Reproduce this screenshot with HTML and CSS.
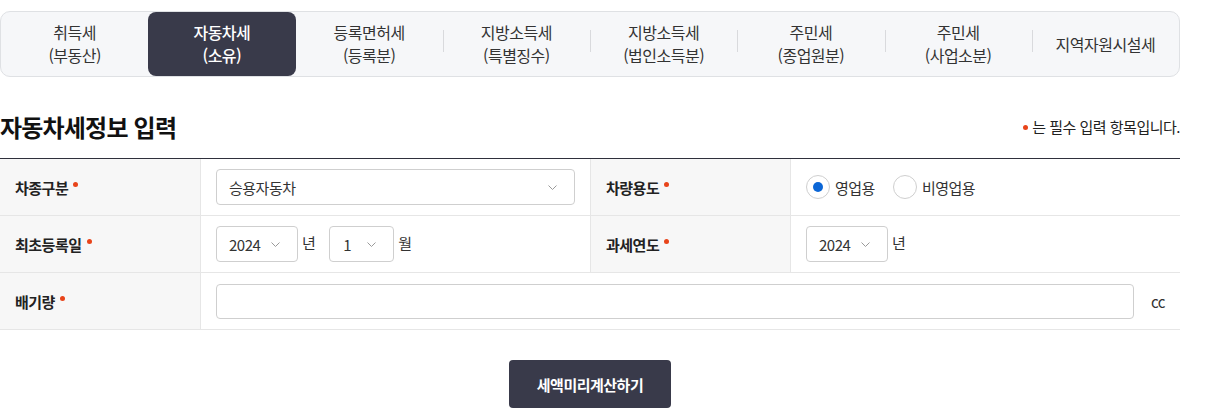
FILE: index.html
```html
<!DOCTYPE html>
<html lang="ko">
<head>
<meta charset="utf-8">
<title>자동차세정보 입력</title>
<link rel="stylesheet" href="styles.css">
</head>
<body>
<div class="wrap">
  <nav class="tabs">
    <a class="tab">취득세<br>(부동산)</a>
    <a class="tab active">자동차세<br>(소유)</a>
    <a class="tab">등록면허세<br>(등록분)</a>
    <a class="tab">지방소득세<br>(특별징수)</a>
    <a class="tab">지방소득세<br>(법인소득분)</a>
    <a class="tab">주민세<br>(종업원분)</a>
    <a class="tab">주민세<br>(사업소분)</a>
    <a class="tab">지역자원시설세</a>
  </nav>

  <div class="title-row">
    <h2 class="title">자동차세정보 입력</h2>
    <p class="req-note"><span class="dot"></span>는 필수 입력 항목입니다.</p>
  </div>

  <div class="form-table">
    <div class="row">
      <div class="th">차종구분<span class="req"></span></div>
      <div class="td">
        <div class="select select-wide"><span>승용자동차</span>
          <svg class="chev" width="9" height="5" viewBox="0 0 9 5"><path d="M0.5 0.5L4.5 4.5L8.5 0.5" fill="none" stroke="#9a9a9a" stroke-width="1"/></svg>
        </div>
      </div>
      <div class="th">차량용도<span class="req"></span></div>
      <div class="td td-last">
        <label class="radio"><span class="circle checked"></span>영업용</label>
        <label class="radio"><span class="circle"></span>비영업용</label>
      </div>
    </div>
    <div class="row">
      <div class="th">최초등록일<span class="req"></span></div>
      <div class="td">
        <div class="select select-year"><span>2024</span>
          <svg class="chev" width="9" height="5" viewBox="0 0 9 5"><path d="M0.5 0.5L4.5 4.5L8.5 0.5" fill="none" stroke="#9a9a9a" stroke-width="1"/></svg>
        </div>
        <span class="unit">년</span>
        <div class="select select-month"><span>1</span>
          <svg class="chev" width="9" height="5" viewBox="0 0 9 5"><path d="M0.5 0.5L4.5 4.5L8.5 0.5" fill="none" stroke="#9a9a9a" stroke-width="1"/></svg>
        </div>
        <span class="unit">월</span>
      </div>
      <div class="th">과세연도<span class="req"></span></div>
      <div class="td td-last">
        <div class="select select-year"><span>2024</span>
          <svg class="chev" width="9" height="5" viewBox="0 0 9 5"><path d="M0.5 0.5L4.5 4.5L8.5 0.5" fill="none" stroke="#9a9a9a" stroke-width="1"/></svg>
        </div>
        <span class="unit">년</span>
      </div>
    </div>
    <div class="row">
      <div class="th">배기량<span class="req"></span></div>
      <div class="td td-span">
        <div class="text-input"></div>
        <span class="cc">cc</span>
      </div>
    </div>
  </div>

  <div class="actions">
    <button class="btn">세액미리계산하기</button>
  </div>
</div>
</body>
</html>
```

FILE: styles.css
```css
* { box-sizing: border-box; }
html, body { margin: 0; padding: 0; background: #fff; }
body {
  font-family: "Noto Sans CJK KR", "Noto Sans", sans-serif;
  color: #333;
  font-size: 15px;
  letter-spacing: -0.5px;
}
.wrap {
  width: 1180px;
  padding-top: 11px;
}

/* tabs */
.tabs {
  display: grid;
  grid-template-columns: repeat(8, 1fr);
  height: 66px;
  border: 1px solid #dfe1e4;
  border-radius: 10px;
  background: #f6f7f9;
}
.tab {
  position: relative;
  display: flex;
  align-items: center;
  justify-content: center;
  text-align: center;
  font-size: 16px;
  line-height: 23px;
  color: #333;
  border-radius: 8px;
}
.tab::before {
  content: "";
  position: absolute;
  left: 0;
  top: 18px;
  width: 1px;
  height: 22px;
  background: #d9dadd;
}
.tab:first-child::before,
.tab.active::before,
.tab.active + .tab::before { display: none; }
.tab.active {
  background: #393a4a;
  color: #fff;
  font-weight: 500;
}

/* title */
.title-row {
  display: flex;
  align-items: center;
  justify-content: space-between;
  height: 30px;
  margin-top: 34px;
  margin-bottom: 17px;
}
.title {
  margin: 0;
  font-size: 24px;
  font-weight: 700;
  color: #111;
  letter-spacing: -0.8px;
}
.req-note {
  margin: 0;
  display: flex;
  align-items: center;
  font-size: 15px;
  color: #222;
}
.req-note .dot {
  width: 5px;
  height: 5px;
  border-radius: 50%;
  background: #e8441a;
  margin-right: 4px;
  margin-top: 2px;
}

/* form table */
.form-table {
  border-top: 1px solid #2f303c;
}
.row {
  display: grid;
  grid-template-columns: 201px 390px 200px 389px;
  height: 57px;
  border-bottom: 1px solid #e6e6e6;
}
.th {
  display: flex;
  align-items: center;
  padding-left: 15px;
  background: #f7f7f7;
  border-right: 1px solid #e6e6e6;
  font-weight: 700;
  color: #222;
}
.req {
  width: 5px;
  height: 5px;
  border-radius: 50%;
  background: #e8441a;
  margin-left: 5px;
  margin-bottom: 5px;
}
.td {
  display: flex;
  align-items: center;
  padding: 0 15px;
  border-right: 1px solid #e6e6e6;
}
.td-last { border-right: none; }
.td-span { grid-column: 2 / 5; border-right: none; }

.select {
  display: flex;
  align-items: center;
  justify-content: space-between;
  height: 36px;
  border: 1px solid #cfcfcf;
  border-radius: 4px;
  background: #fff;
  padding: 0 17px 0 12px;
  color: #333;
}
.select-wide { width: 359px; }
.select-year { width: 82px; }
.select-month { width: 65px; padding-left: 13px; }
.chev { flex: none; margin-top: 1px; }
.unit {
  margin-left: 4px;
  margin-right: 14px;
  margin-bottom: 4px;
  color: #333;
}

.radio {
  display: flex;
  align-items: center;
  margin-right: 18px;
  color: #333;
}
.circle {
  width: 24px;
  height: 24px;
  border: 1px solid #cfcfcf;
  border-radius: 50%;
  background: #fff;
  margin-right: 5px;
  display: flex;
  align-items: center;
  justify-content: center;
}
.circle.checked::after {
  content: "";
  width: 10px;
  height: 10px;
  border-radius: 50%;
  background: #0b66d6;
}

.text-input {
  width: 918px;
  height: 35px;
  border: 1px solid #cfcfcf;
  border-radius: 4px;
  background: #fff;
}
.cc {
  margin-left: 17px;
  color: #333;
}

.actions {
  display: flex;
  justify-content: center;
  margin-top: 30px;
}
.btn {
  width: 162px;
  height: 48px;
  border: none;
  border-radius: 4px;
  background: #393a4a;
  color: #fff;
  font-family: "Noto Sans CJK KR", "Noto Sans", sans-serif;
  font-size: 15px;
  font-weight: 700;
  letter-spacing: -0.5px;
}
```
